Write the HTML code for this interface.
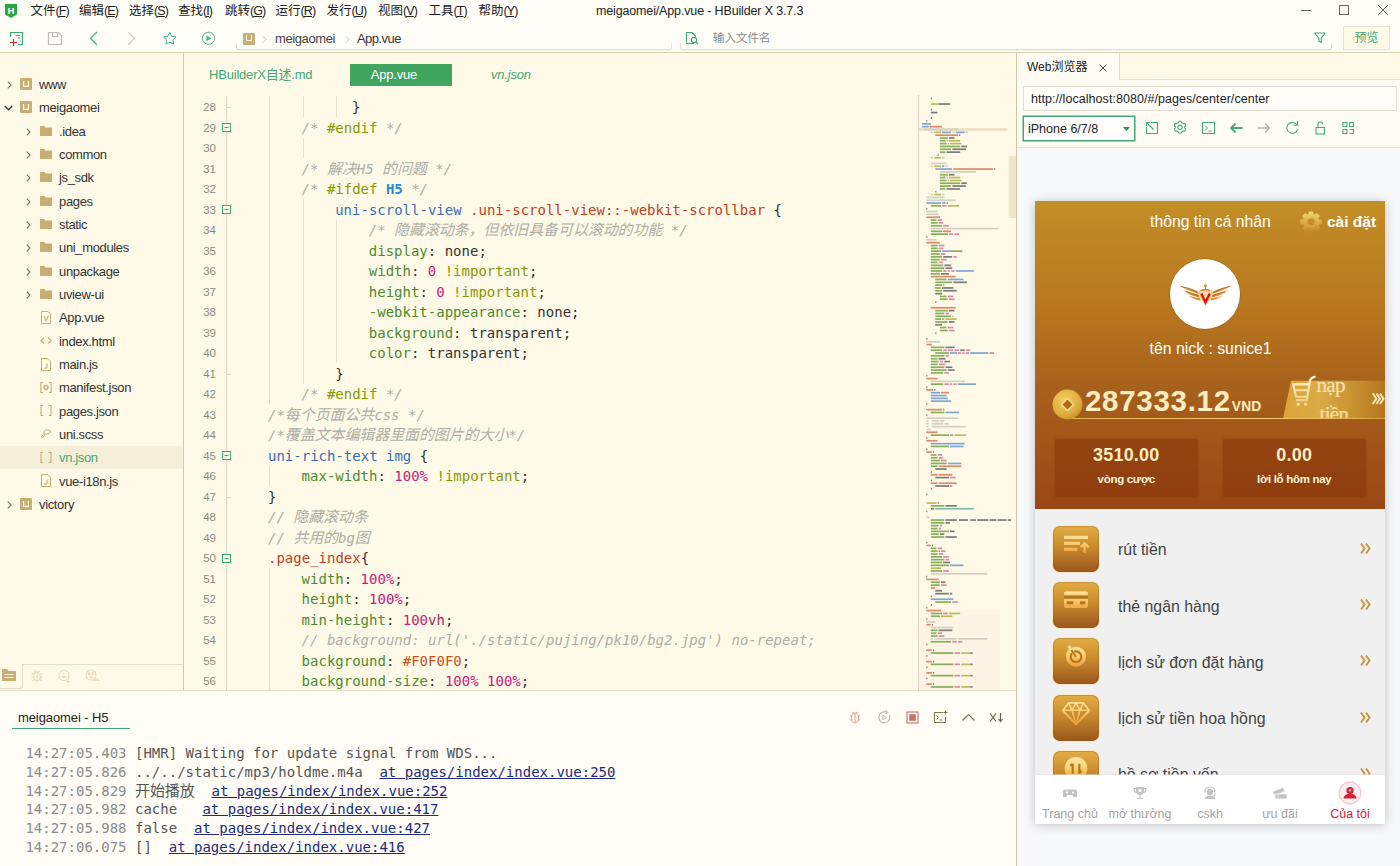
<!DOCTYPE html>
<html lang="zh">
<head>
<meta charset="utf-8">
<title>meigaomei/App.vue - HBuilder X 3.7.3</title>
<style>
*{box-sizing:border-box;margin:0;padding:0}
html,body{width:1400px;height:866px;overflow:hidden;background:#fffdf8}
body{position:relative;font-family:"Liberation Sans","Noto Sans CJK SC",sans-serif;font-size:13px;color:#333}
.abs{position:absolute}
svg{display:block;overflow:visible}
/* top bars */
#menubar{left:0;top:0;width:1400px;height:22px;background:#fffdf8}
#menubar span{position:absolute;top:3px;font-size:12.5px;color:#222;white-space:nowrap;line-height:16px}
#menubar i{font-style:normal;letter-spacing:-0.9px}
#toolbar{left:0;top:22px;width:1400px;height:31px;background:#fffdf8}
#topline{z-index:5;left:0;top:52px;width:1400px;height:1px;background:#ddd3b4}
/* sidebar */
#sidebar{left:0;top:52px;width:183px;height:638px;background:#fffae8}
#sideline{left:183px;top:53px;width:1px;height:637px;background:#d2caac}
.row{position:absolute;left:0;width:183px;height:23px;font-size:13px;color:#333;line-height:23px;white-space:nowrap}
.row .t{position:absolute;top:0.500px;letter-spacing:-0.350px}
/* editor */
#editor{left:184px;top:52px;width:833px;height:638px;background:#fffae8}
.code{font-family:"DejaVu Sans Mono","Liberation Mono","Noto Sans CJK SC",monospace;font-size:14px;white-space:pre}
.ln{position:absolute;left:200px;width:16px;text-align:right;font-size:11.5px;color:#8b8b80;line-height:20px;height:20px;font-family:"Liberation Sans",sans-serif}
.cl{position:absolute;left:234px;height:20px;line-height:20px;color:#333}

.c{color:#aeaea6;font-style:italic}
.d{color:#859900}
.h{color:#268bd2;font-weight:bold}
.tg{color:#3a6db5}
.cs{color:#c0401f}
.p{color:#4d8a32}
.n{color:#c7207c}
.u{color:#a02c5a}
.v{color:#333}
.hx{color:#c9531c}
.z{font-size:15px;letter-spacing:-0.1px}
.g{position:absolute;width:1px;background:#e6dfca}
.tab{letter-spacing:-0.2px;position:absolute;top:12px;height:22px;line-height:22px;font-size:13px;color:#3fa877;white-space:nowrap}
/* console */
#console{left:0;top:691px;width:1017px;height:175px;background:#fffdf6}
.cline{position:absolute;left:25px;height:18px;line-height:18px;color:#444}

.ts{color:#8c8c8c}
.cm{color:#555}
.lk{color:#1d2b7e;text-decoration:underline}
/* right */

#right{left:1017px;top:52px;width:383px;height:814px;background:#fffcf4}
#vdiv{left:1016px;top:53px;width:1px;height:813px;background:#cdc5a6}
#phone{left:1035px;top:201px;width:350px;height:623px;overflow:hidden;background:#f0f0f0;box-shadow:0 1px 10px rgba(0,0,0,.22)}
#phone .w{position:absolute;color:#fff;white-space:nowrap;line-height:20px}
.li{position:absolute;left:0;width:350px;height:56px}
.li .ib{position:absolute;left:18px;top:5px;width:46px;height:46px;border-radius:7px;background:linear-gradient(#e2ad45,#cd8f30 40%,#99571b);box-shadow:0 0 0 1px rgba(253,232,196,.95),inset 0 0 0 1px rgba(150,85,20,.3)}
.li .tx{position:absolute;left:83px;top:18.300px;font-size:15.900px;line-height:22px;color:#434343;white-space:nowrap}
.li .ar{position:absolute;left:324px;top:21px}
.tb{position:absolute;top:0;width:70px;height:50px;text-align:center;font-size:12.5px;color:#a4a4a4;white-space:nowrap}
.tb span{position:absolute;left:-10px;width:90px;top:31.600px;line-height:16px;text-align:center}

</style>
</head>
<body>
<div id="menubar" class="abs">
<svg class="abs" style="left:5px;top:4px" width="12" height="14" viewBox="0 0 12 14"><path d="M0 0H12V10.5L6 14L0 10.5Z" fill="#2aa744"/><text x="6" y="9.6" font-family="Liberation Sans,sans-serif" font-size="9.5" font-weight="bold" fill="#fff" text-anchor="middle">H</text></svg>
<span style="left:30.5px">文件<i>(<u>F</u>)</i></span><span style="left:79px">编辑<i>(<u>E</u>)</i></span><span style="left:129px">选择<i>(<u>S</u>)</i></span><span style="left:178px">查找<i>(<u>I</u>)</i></span><span style="left:225px">跳转<i>(<u>G</u>)</i></span><span style="left:275.5px">运行<i>(<u>R</u>)</i></span><span style="left:326.5px">发行<i>(<u>U</u>)</i></span><span style="left:378px">视图<i>(<u>V</u>)</i></span><span style="left:428.5px">工具<i>(<u>T</u>)</i></span><span style="left:478.5px">帮助<i>(<u>Y</u>)</i></span>
<span style="left:596px;font-size:12.5px;letter-spacing:-0.15px">meigaomei/App.vue - HBuilder X 3.7.3</span>
<svg class="abs" style="left:1296px;top:0" width="104" height="22" viewBox="0 0 104 22"><g stroke="#666" stroke-width="1" fill="none"><path d="M5 10.5H15"/><rect x="43.5" y="5.5" width="9" height="9"/><path d="M82 5L92 15M92 5L82 15"/></g></svg>
</div>
<div id="toolbar" class="abs">
<svg class="abs" style="left:0;top:0" width="240" height="30" viewBox="0 22 240 30" fill="none" stroke-width="1.2">
<g stroke="#3fa877"><path d="M10.5 37V32.5H22.5V44.5H18"/><path d="M15.5 35.5H20M18 38H20M19.5 41H20.5" stroke-width="1"/></g>
<path d="M13.500 39V46M10 42.500H17" stroke="#cc2a2a" stroke-width="1.100"/>
<g stroke="#bdbdbd"><path d="M48.5 32.5H58.5L61.5 35.5V44.5H48.5Z"/><path d="M52.5 32.5V36.5H57.5V32.5"/></g>
<path d="M97 32L90.500 38.500L97 45" stroke="#4db184" stroke-width="1.300"/>
<path d="M128 32L134.5 38.5L128 45" stroke="#cfcfcf" stroke-width="1.3"/>
<path d="M169.800 32.300L171.700 36.300L176 36.900L172.900 39.900L173.700 44.200L169.800 42.100L165.900 44.200L166.700 39.900L163.600 36.900L167.900 36.300Z" stroke="#4db184" stroke-width="1" stroke-linejoin="round"/>
<circle cx="208.500" cy="38.300" r="6.100" stroke="#4db184" stroke-width="1"/><path d="M206.800 36L210.800 38.300L206.800 40.600Z" fill="#4db184" stroke="#4db184" stroke-width="0.800" stroke-linejoin="round"/>
</svg>
<div class="abs" style="left:236px;top:21px;width:436px;height:7px;border-left:1px solid #e6dfc9;border-bottom:1px solid #dfd7bd;border-right:1px solid #e6dfc9;border-radius:0 0 2px 2px"></div>
<div class="abs" style="left:242.500px;top:10.500px;width:12px;height:12px;background:#c9ae74;border-radius:1px"></div><div class="abs" style="left:245.500px;top:13px;width:6px;height:6px;border:1.300px solid #fffae8;border-top:none"></div>
<svg class="abs" style="left:262px;top:13.500px" width="5" height="7" viewBox="0 0 5 7"><path d="M1 0.500L4 3.500L1 6.500" stroke="#c4c4c4" fill="none"/></svg><span class="abs" style="left:275px;top:9px;font-size:13px;color:#444;line-height:16px;letter-spacing:-0.400px">meigaomei</span><svg class="abs" style="left:345px;top:13.500px" width="5" height="7" viewBox="0 0 5 7"><path d="M1 0.500L4 3.500L1 6.500" stroke="#c4c4c4" fill="none"/></svg><span class="abs" style="left:357px;top:9px;font-size:13px;color:#333;line-height:16px;letter-spacing:-0.550px">App.vue</span>
<div class="abs" style="left:680px;top:21px;width:652px;height:7px;border-left:1px solid #e6dfc9;border-bottom:1px solid #dfd7bd;border-right:1px solid #e6dfc9;border-radius:0 0 2px 2px"></div>
<svg class="abs" style="left:685px;top:9px" width="14" height="14" viewBox="0 0 14 14" fill="none" stroke="#3fa877" stroke-width="1.1"><path d="M9 12.5H1.5V1.5H7L10.5 5V6"/><circle cx="9" cy="9" r="2.6"/><path d="M11 11L13 13"/></svg><span class="abs" style="left:713px;top:9px;font-size:11.5px;color:#8a8a8a;line-height:14px">输入文件名</span>
<svg class="abs" style="left:1314px;top:10px" width="12" height="12" viewBox="0 0 12 12" fill="none" stroke="#3fa877" stroke-width="1.1" stroke-linejoin="round"><path d="M0.8 1H11.2L7.2 6V10.5L4.8 9V6Z"/></svg><div class="abs" style="left:1343px;top:4px;width:47px;height:24px;background:#fffae8;border:1px solid #ebe4cf;color:#3fa877;font-size:12px;line-height:22px;text-align:center">预览</div>
</div>
<div id="topline" class="abs"></div>
<div id="sidebar" class="abs">
<div class="row" style="top:20.5px"><svg class="abs" style="left:6.5px;top:8.500px" width="5" height="8" viewBox="0 0 5 8"><path d="M0.800 0.700L4 4L0.800 7.300" stroke="#777" stroke-width="1.200" fill="none"/></svg><svg class="abs" style="left:20px;top:5.5px" width="12" height="12" viewBox="0 0 12 12"><rect width="12" height="12" rx="1" fill="#c9ae74"/><path d="M3.6 3V8.4H8.4V3" stroke="#fffae8" stroke-width="1.3" fill="none"/></svg><span class="t" style="left:39px">www</span></div>
<div class="row" style="top:43.8px"><svg class="abs" style="left:4px;top:9px" width="9" height="6" viewBox="0 0 9 6"><path d="M0.800 1L4.500 4.700L8.200 1" stroke="#3a3a3a" stroke-width="1.500" fill="none"/></svg><svg class="abs" style="left:20px;top:5.5px" width="12" height="12" viewBox="0 0 12 12"><rect width="12" height="12" rx="1" fill="#c9ae74"/><path d="M3.6 3V8.4H8.4V3" stroke="#fffae8" stroke-width="1.3" fill="none"/></svg><span class="t" style="left:39px">meigaomei</span></div>
<div class="row" style="top:67.2px"><svg class="abs" style="left:25.5px;top:8.500px" width="5" height="8" viewBox="0 0 5 8"><path d="M0.800 0.700L4 4L0.800 7.300" stroke="#777" stroke-width="1.200" fill="none"/></svg><svg class="abs" style="left:40px;top:6.5px" width="12" height="10" viewBox="0 0 12 10"><path d="M0 0.5Q0 0 0.5 0H4.5L5.5 1.5H11.5Q12 1.5 12 2V9.5Q12 10 11.5 10H0.5Q0 10 0 9.5Z" fill="#c9ae74"/></svg><span class="t" style="left:59px">.idea</span></div>
<div class="row" style="top:90.5px"><svg class="abs" style="left:25.5px;top:8.500px" width="5" height="8" viewBox="0 0 5 8"><path d="M0.800 0.700L4 4L0.800 7.300" stroke="#777" stroke-width="1.200" fill="none"/></svg><svg class="abs" style="left:40px;top:6.5px" width="12" height="10" viewBox="0 0 12 10"><path d="M0 0.5Q0 0 0.5 0H4.5L5.5 1.5H11.5Q12 1.5 12 2V9.5Q12 10 11.5 10H0.5Q0 10 0 9.5Z" fill="#c9ae74"/></svg><span class="t" style="left:59px">common</span></div>
<div class="row" style="top:113.8px"><svg class="abs" style="left:25.5px;top:8.500px" width="5" height="8" viewBox="0 0 5 8"><path d="M0.800 0.700L4 4L0.800 7.300" stroke="#777" stroke-width="1.200" fill="none"/></svg><svg class="abs" style="left:40px;top:6.5px" width="12" height="10" viewBox="0 0 12 10"><path d="M0 0.5Q0 0 0.5 0H4.5L5.5 1.5H11.5Q12 1.5 12 2V9.5Q12 10 11.5 10H0.5Q0 10 0 9.5Z" fill="#c9ae74"/></svg><span class="t" style="left:59px">js_sdk</span></div>
<div class="row" style="top:137.2px"><svg class="abs" style="left:25.5px;top:8.500px" width="5" height="8" viewBox="0 0 5 8"><path d="M0.800 0.700L4 4L0.800 7.300" stroke="#777" stroke-width="1.200" fill="none"/></svg><svg class="abs" style="left:40px;top:6.5px" width="12" height="10" viewBox="0 0 12 10"><path d="M0 0.5Q0 0 0.5 0H4.5L5.5 1.5H11.5Q12 1.5 12 2V9.5Q12 10 11.5 10H0.5Q0 10 0 9.5Z" fill="#c9ae74"/></svg><span class="t" style="left:59px">pages</span></div>
<div class="row" style="top:160.5px"><svg class="abs" style="left:25.5px;top:8.500px" width="5" height="8" viewBox="0 0 5 8"><path d="M0.800 0.700L4 4L0.800 7.300" stroke="#777" stroke-width="1.200" fill="none"/></svg><svg class="abs" style="left:40px;top:6.5px" width="12" height="10" viewBox="0 0 12 10"><path d="M0 0.5Q0 0 0.5 0H4.5L5.5 1.5H11.5Q12 1.5 12 2V9.5Q12 10 11.5 10H0.5Q0 10 0 9.5Z" fill="#c9ae74"/></svg><span class="t" style="left:59px">static</span></div>
<div class="row" style="top:183.8px"><svg class="abs" style="left:25.5px;top:8.500px" width="5" height="8" viewBox="0 0 5 8"><path d="M0.800 0.700L4 4L0.800 7.300" stroke="#777" stroke-width="1.200" fill="none"/></svg><svg class="abs" style="left:40px;top:6.5px" width="12" height="10" viewBox="0 0 12 10"><path d="M0 0.5Q0 0 0.5 0H4.5L5.5 1.5H11.5Q12 1.5 12 2V9.5Q12 10 11.5 10H0.5Q0 10 0 9.5Z" fill="#c9ae74"/></svg><span class="t" style="left:59px">uni_modules</span></div>
<div class="row" style="top:207.2px"><svg class="abs" style="left:25.5px;top:8.500px" width="5" height="8" viewBox="0 0 5 8"><path d="M0.800 0.700L4 4L0.800 7.300" stroke="#777" stroke-width="1.200" fill="none"/></svg><svg class="abs" style="left:40px;top:6.5px" width="12" height="10" viewBox="0 0 12 10"><path d="M0 0.5Q0 0 0.5 0H4.5L5.5 1.5H11.5Q12 1.5 12 2V9.5Q12 10 11.5 10H0.5Q0 10 0 9.5Z" fill="#c9ae74"/></svg><span class="t" style="left:59px">unpackage</span></div>
<div class="row" style="top:230.5px"><svg class="abs" style="left:25.5px;top:8.500px" width="5" height="8" viewBox="0 0 5 8"><path d="M0.800 0.700L4 4L0.800 7.300" stroke="#777" stroke-width="1.200" fill="none"/></svg><svg class="abs" style="left:40px;top:6.5px" width="12" height="10" viewBox="0 0 12 10"><path d="M0 0.5Q0 0 0.5 0H4.5L5.5 1.5H11.5Q12 1.5 12 2V9.5Q12 10 11.5 10H0.5Q0 10 0 9.5Z" fill="#c9ae74"/></svg><span class="t" style="left:59px">uview-ui</span></div>
<div class="row" style="top:253.8px"><svg class="abs" style="left:40px;top:5px" width="12" height="13" viewBox="0 0 12 13" fill="none" stroke="#c9ae74" stroke-width="1"><path d="M1.5 0.5H8L10.5 3V12.5H1.5Z"/><path d="M3.8 5L6 10L8.2 5" stroke-width="1.1"/></svg><span class="t" style="left:59px">App.vue</span></div>
<div class="row" style="top:277.2px"><svg class="abs" style="left:40px;top:5px" width="12" height="13" viewBox="0 0 12 13" fill="none" stroke="#c9ae74" stroke-width="1"><path d="M4 3.5L1 6.5L4 9.5M8 3.5L11 6.5L8 9.5" stroke-width="1.2"/></svg><span class="t" style="left:59px">index.html</span></div>
<div class="row" style="top:300.5px"><svg class="abs" style="left:40px;top:5px" width="12" height="13" viewBox="0 0 12 13" fill="none" stroke="#c9ae74" stroke-width="1"><path d="M1.5 0.5H8L10.5 3V12.5H1.5Z"/><path d="M7 5.5V9Q7 10.2 5.8 10.2Q5 10.2 4.6 9.6" stroke-width="1.1"/></svg><span class="t" style="left:59px">main.js</span></div>
<div class="row" style="top:323.8px"><svg class="abs" style="left:40px;top:5px" width="12" height="13" viewBox="0 0 12 13" fill="none" stroke="#c9ae74" stroke-width="1"><path d="M3 1.5H0.8V11.5H3M9 1.5H11.2V11.5H9" stroke-width="1.1"/><circle cx="6" cy="6.5" r="2" stroke-width="1.3"/></svg><span class="t" style="left:59px">manifest.json</span></div>
<div class="row" style="top:347.2px"><svg class="abs" style="left:40px;top:5px" width="12" height="13" viewBox="0 0 12 13" fill="none" stroke="#c9ae74" stroke-width="1"><path d="M3.2 1.5H1V11.5H3.2M8.8 1.5H11V11.5H8.8" stroke-width="1.1"/></svg><span class="t" style="left:59px">pages.json</span></div>
<div class="row" style="top:370.5px"><svg class="abs" style="left:40px;top:5px" width="12" height="13" viewBox="0 0 12 13" fill="none" stroke="#c9ae74" stroke-width="1"><path d="M10.5 3.5Q9 1 6 2Q3 3.2 4 5.5Q5.2 7.2 3.5 9Q2 10.5 1.2 9Q0.8 7.5 3.5 7.2M4 5.5Q7 7 9.5 5Q11 3.5 10 2.8" stroke-width="1"/></svg><span class="t" style="left:59px">uni.scss</span></div>
<div class="row" style="top:393.8px;background:#f5eed8"><svg class="abs" style="left:40px;top:5px" width="12" height="13" viewBox="0 0 12 13" fill="none" stroke="#c9ae74" stroke-width="1"><path d="M3.2 1.5H1V11.5H3.2M8.8 1.5H11V11.5H8.8" stroke-width="1.1"/></svg><span class="t" style="left:59px;color:#3fa877">vn.json</span></div>
<div class="row" style="top:417.2px"><svg class="abs" style="left:40px;top:5px" width="12" height="13" viewBox="0 0 12 13" fill="none" stroke="#c9ae74" stroke-width="1"><path d="M1.5 0.5H8L10.5 3V12.5H1.5Z"/><path d="M7 5.5V9Q7 10.2 5.8 10.2Q5 10.2 4.6 9.6" stroke-width="1.1"/></svg><span class="t" style="left:59px">vue-i18n.js</span></div>
<div class="row" style="top:440.5px"><svg class="abs" style="left:6.5px;top:8.500px" width="5" height="8" viewBox="0 0 5 8"><path d="M0.800 0.700L4 4L0.800 7.300" stroke="#777" stroke-width="1.200" fill="none"/></svg><svg class="abs" style="left:20px;top:5.5px" width="12" height="12" viewBox="0 0 12 12"><rect width="12" height="12" rx="1" fill="#c9ae74"/><path d="M3.6 3V8.4H8.4V3" stroke="#fffae8" stroke-width="1.3" fill="none"/></svg><span class="t" style="left:39px">victory</span></div>
<div class="abs" style="left:22px;top:612px;width:161px;height:1px;background:#e3dcc6"></div><div class="abs" style="left:0;top:612px;width:23px;height:25px;border-right:1px solid #e3dcc6;border-bottom:1px solid #e3dcc6;border-radius:0 0 3px 0"></div><svg class="abs" style="left:0;top:610.500px" width="110" height="26" viewBox="0 0 110 26" fill="none">
<path d="M2 6.5Q2 6 2.5 6H7L8.5 8H15.5Q16 8 16 8.5V17.5Q16 18 15.5 18H2.5Q2 18 2 17.5Z" fill="#c9ae74"/><path d="M4.5 11.5H13.5M4.5 14.5H13.5" stroke="#fffae8" stroke-width="1.2"/>
<g stroke="#e5d9b8" stroke-width="1.1"><ellipse cx="37" cy="13.5" rx="3.2" ry="4.5"/><path d="M34.5 8L36 9.5M39.5 8L38 9.5M31.5 11H33.8M31.5 14.5H33.8M32 18L34 16.5M42.5 11H40.2M42.5 14.5H40.2M42 18L40 16.5M37 9V18"/>
<circle cx="64" cy="12.5" r="5"/><path d="M64 10V15M62.5 13.5L64 15L65.5 13.5M66 18.5H70M68 16.5V20.5"/>
<circle cx="91" cy="12" r="5"/><circle cx="89" cy="10.5" r="1"/><circle cx="93" cy="10.5" r="1"/><circle cx="91" cy="14" r="1"/><path d="M94 17.5Q96.5 14 99 17.5Z"/></g>
</svg></div>
<div id="sideline" class="abs"></div>
<div id="editor" class="abs">
<!--MM--><svg class="abs" style="left:734px;top:43px" width="98" height="595" viewBox="0 0 98 595"><rect x="0" y="515" width="82" height="80" fill="#fbeee2" opacity="0.550"/><rect x="0.500" y="33.0" width="89" height="2.900" fill="#ebe2c8"/><rect x="0" y="0" width="1" height="595" fill="#d8d2bf"/><rect x="12.8" y="2.5" width="1.1" height="1.700" fill="#7b7b78"/><rect x="12.8" y="8.2" width="7.9" height="1.700" fill="#b7bd5a"/><rect x="20.7" y="8.2" width="11.3" height="1.700" fill="#7b7b78"/><rect x="12.8" y="13.8" width="1.1" height="1.700" fill="#7b7b78"/><rect x="12.8" y="16.7" width="6.8" height="1.700" fill="#7b7b78"/><rect x="12.8" y="22.3" width="1.1" height="1.700" fill="#7b7b78"/><rect x="8.3" y="25.1" width="1.1" height="1.700" fill="#7b7b78"/><rect x="3.8" y="28.0" width="9.0" height="1.700" fill="#7fa6d6"/><rect x="3.8" y="30.8" width="6.8" height="1.700" fill="#7fa6d6"/><rect x="11.7" y="30.8" width="12.4" height="1.700" fill="#dd8a6a"/><rect x="6.0" y="33.6" width="33.9" height="1.700" fill="#d3d0c2"/><rect x="12.8" y="36.5" width="2.3" height="1.700" fill="#d3d0c2"/><rect x="16.2" y="36.5" width="6.8" height="1.700" fill="#b7bd5a"/><rect x="24.1" y="36.5" width="9.0" height="1.700" fill="#7fa6d6"/><rect x="34.3" y="36.5" width="2.3" height="1.700" fill="#d3d0c2"/><rect x="37.7" y="36.5" width="9.0" height="1.700" fill="#7fa6d6"/><rect x="47.8" y="36.5" width="2.3" height="1.700" fill="#d3d0c2"/><rect x="17.3" y="39.3" width="22.6" height="1.700" fill="#dd8a6a"/><rect x="41.1" y="39.3" width="1.1" height="1.700" fill="#7b7b78"/><rect x="21.8" y="42.1" width="7.9" height="1.700" fill="#86b05a"/><rect x="30.9" y="42.1" width="5.6" height="1.700" fill="#7b7b78"/><rect x="21.8" y="44.9" width="5.6" height="1.700" fill="#86b05a"/><rect x="28.6" y="44.9" width="1.1" height="1.700" fill="#d98aa9"/><rect x="30.9" y="44.9" width="11.3" height="1.700" fill="#b7bd5a"/><rect x="21.8" y="47.8" width="6.8" height="1.700" fill="#86b05a"/><rect x="29.8" y="47.8" width="1.1" height="1.700" fill="#d98aa9"/><rect x="32.0" y="47.8" width="11.3" height="1.700" fill="#b7bd5a"/><rect x="21.8" y="50.6" width="20.3" height="1.700" fill="#86b05a"/><rect x="43.3" y="50.6" width="5.6" height="1.700" fill="#7b7b78"/><rect x="21.8" y="53.4" width="11.3" height="1.700" fill="#86b05a"/><rect x="34.3" y="53.4" width="13.6" height="1.700" fill="#7b7b78"/><rect x="21.8" y="56.3" width="5.6" height="1.700" fill="#86b05a"/><rect x="28.6" y="56.3" width="13.6" height="1.700" fill="#7b7b78"/><rect x="19.6" y="59.1" width="1.1" height="1.700" fill="#7b7b78"/><rect x="12.8" y="61.9" width="2.3" height="1.700" fill="#d3d0c2"/><rect x="16.2" y="61.9" width="6.8" height="1.700" fill="#b7bd5a"/><rect x="24.1" y="61.9" width="2.3" height="1.700" fill="#d3d0c2"/><rect x="12.8" y="67.6" width="15.8" height="1.700" fill="#d3d0c2"/><rect x="12.8" y="70.4" width="2.3" height="1.700" fill="#d3d0c2"/><rect x="16.2" y="70.4" width="6.8" height="1.700" fill="#b7bd5a"/><rect x="24.1" y="70.4" width="2.3" height="1.700" fill="#7fa6d6"/><rect x="27.5" y="70.4" width="2.3" height="1.700" fill="#d3d0c2"/><rect x="17.3" y="73.2" width="16.9" height="1.700" fill="#7fa6d6"/><rect x="35.4" y="73.2" width="39.5" height="1.700" fill="#dd8a6a"/><rect x="76.1" y="73.2" width="1.1" height="1.700" fill="#7b7b78"/><rect x="21.8" y="76.1" width="36.2" height="1.700" fill="#d3d0c2"/><rect x="21.8" y="78.9" width="7.9" height="1.700" fill="#86b05a"/><rect x="30.9" y="78.9" width="5.6" height="1.700" fill="#7b7b78"/><rect x="21.8" y="81.7" width="5.6" height="1.700" fill="#86b05a"/><rect x="28.6" y="81.7" width="1.1" height="1.700" fill="#d98aa9"/><rect x="30.9" y="81.7" width="11.3" height="1.700" fill="#b7bd5a"/><rect x="21.8" y="84.6" width="6.8" height="1.700" fill="#86b05a"/><rect x="29.8" y="84.6" width="1.1" height="1.700" fill="#d98aa9"/><rect x="32.0" y="84.6" width="11.3" height="1.700" fill="#b7bd5a"/><rect x="21.8" y="87.4" width="20.3" height="1.700" fill="#86b05a"/><rect x="43.3" y="87.4" width="5.6" height="1.700" fill="#7b7b78"/><rect x="21.8" y="90.2" width="11.3" height="1.700" fill="#86b05a"/><rect x="34.3" y="90.2" width="13.6" height="1.700" fill="#7b7b78"/><rect x="21.8" y="93.1" width="5.6" height="1.700" fill="#86b05a"/><rect x="28.6" y="93.1" width="13.6" height="1.700" fill="#7b7b78"/><rect x="17.3" y="95.9" width="1.1" height="1.700" fill="#7b7b78"/><rect x="12.8" y="98.7" width="2.3" height="1.700" fill="#d3d0c2"/><rect x="16.2" y="98.7" width="6.8" height="1.700" fill="#b7bd5a"/><rect x="24.1" y="98.7" width="2.3" height="1.700" fill="#d3d0c2"/><rect x="8.3" y="101.6" width="18.1" height="1.700" fill="#d3d0c2"/><rect x="8.3" y="104.4" width="29.4" height="1.700" fill="#d3d0c2"/><rect x="8.3" y="107.2" width="14.7" height="1.700" fill="#7fa6d6"/><rect x="24.1" y="107.2" width="3.4" height="1.700" fill="#7fa6d6"/><rect x="28.6" y="107.2" width="1.1" height="1.700" fill="#7b7b78"/><rect x="12.8" y="110.0" width="10.2" height="1.700" fill="#86b05a"/><rect x="24.1" y="110.0" width="4.5" height="1.700" fill="#d98aa9"/><rect x="29.7" y="110.0" width="11.3" height="1.700" fill="#b7bd5a"/><rect x="8.3" y="112.9" width="1.1" height="1.700" fill="#7b7b78"/><rect x="8.3" y="115.7" width="11.3" height="1.700" fill="#d3d0c2"/><rect x="8.3" y="118.5" width="12.4" height="1.700" fill="#d3d0c2"/><rect x="8.3" y="121.4" width="12.4" height="1.700" fill="#dd8a6a"/><rect x="20.7" y="121.4" width="1.1" height="1.700" fill="#7b7b78"/><rect x="12.8" y="124.2" width="5.6" height="1.700" fill="#86b05a"/><rect x="19.6" y="124.2" width="4.5" height="1.700" fill="#d98aa9"/><rect x="12.8" y="127.0" width="6.8" height="1.700" fill="#86b05a"/><rect x="20.7" y="127.0" width="4.5" height="1.700" fill="#d98aa9"/><rect x="12.8" y="129.9" width="11.3" height="1.700" fill="#86b05a"/><rect x="25.2" y="129.9" width="5.6" height="1.700" fill="#d98aa9"/><rect x="12.8" y="132.7" width="67.8" height="1.700" fill="#d3d0c2"/><rect x="12.8" y="135.5" width="11.3" height="1.700" fill="#86b05a"/><rect x="25.2" y="135.5" width="7.9" height="1.700" fill="#dd8a6a"/><rect x="12.8" y="138.3" width="16.9" height="1.700" fill="#86b05a"/><rect x="30.9" y="138.3" width="4.5" height="1.700" fill="#d98aa9"/><rect x="36.5" y="138.3" width="4.5" height="1.700" fill="#d98aa9"/><rect x="8.3" y="141.2" width="1.1" height="1.700" fill="#7b7b78"/><rect x="8.3" y="144.0" width="10.2" height="1.700" fill="#d3d0c2"/><rect x="8.3" y="146.8" width="13.6" height="1.700" fill="#dd8a6a"/><rect x="12.8" y="149.7" width="6.8" height="1.700" fill="#86b05a"/><rect x="20.7" y="149.7" width="5.6" height="1.700" fill="#d98aa9"/><rect x="12.8" y="152.5" width="6.8" height="1.700" fill="#86b05a"/><rect x="20.7" y="152.5" width="4.5" height="1.700" fill="#d98aa9"/><rect x="12.8" y="155.3" width="10.2" height="1.700" fill="#86b05a"/><rect x="24.1" y="155.3" width="9.0" height="1.700" fill="#7fa6d6"/><rect x="33.1" y="155.3" width="11.3" height="1.700" fill="#86b05a"/><rect x="12.8" y="158.2" width="9.0" height="1.700" fill="#86b05a"/><rect x="23.0" y="158.2" width="4.5" height="1.700" fill="#d98aa9"/><rect x="12.8" y="161.0" width="11.3" height="1.700" fill="#86b05a"/><rect x="25.2" y="161.0" width="9.0" height="1.700" fill="#7b7b78"/><rect x="35.4" y="161.0" width="3.4" height="1.700" fill="#d98aa9"/><rect x="12.8" y="163.8" width="9.0" height="1.700" fill="#86b05a"/><rect x="23.0" y="163.8" width="5.6" height="1.700" fill="#d98aa9"/><rect x="12.8" y="166.6" width="6.8" height="1.700" fill="#86b05a"/><rect x="20.7" y="166.6" width="4.5" height="1.700" fill="#d98aa9"/><rect x="12.8" y="169.5" width="12.4" height="1.700" fill="#86b05a"/><rect x="26.4" y="169.5" width="6.8" height="1.700" fill="#7b7b78"/><rect x="12.8" y="172.3" width="13.6" height="1.700" fill="#86b05a"/><rect x="27.5" y="172.3" width="6.8" height="1.700" fill="#7b7b78"/><rect x="12.8" y="175.1" width="11.3" height="1.700" fill="#86b05a"/><rect x="25.2" y="175.1" width="3.4" height="1.700" fill="#d98aa9"/><rect x="29.7" y="175.1" width="2.3" height="1.700" fill="#d98aa9"/><rect x="33.1" y="175.1" width="3.4" height="1.700" fill="#d98aa9"/><rect x="37.7" y="175.1" width="18.1" height="1.700" fill="#7fa6d6"/><rect x="12.8" y="178.0" width="9.0" height="1.700" fill="#86b05a"/><rect x="23.0" y="178.0" width="7.9" height="1.700" fill="#7b7b78"/><rect x="12.8" y="180.8" width="24.9" height="1.700" fill="#dd8a6a"/><rect x="17.3" y="183.6" width="11.3" height="1.700" fill="#86b05a"/><rect x="29.8" y="183.6" width="15.8" height="1.700" fill="#7fa6d6"/><rect x="17.3" y="186.5" width="16.9" height="1.700" fill="#86b05a"/><rect x="35.4" y="186.5" width="13.6" height="1.700" fill="#7b7b78"/><rect x="17.3" y="189.3" width="6.8" height="1.700" fill="#86b05a"/><rect x="25.2" y="189.3" width="1.1" height="1.700" fill="#d98aa9"/><rect x="17.3" y="192.1" width="5.6" height="1.700" fill="#86b05a"/><rect x="24.1" y="192.1" width="11.3" height="1.700" fill="#7b7b78"/><rect x="17.3" y="194.9" width="6.8" height="1.700" fill="#86b05a"/><rect x="25.2" y="194.9" width="13.6" height="1.700" fill="#7b7b78"/><rect x="17.3" y="197.8" width="6.8" height="1.700" fill="#7b7b78"/><rect x="21.8" y="200.6" width="6.8" height="1.700" fill="#86b05a"/><rect x="29.8" y="200.6" width="5.6" height="1.700" fill="#d98aa9"/><rect x="21.8" y="203.4" width="7.9" height="1.700" fill="#86b05a"/><rect x="30.9" y="203.4" width="5.6" height="1.700" fill="#d98aa9"/><rect x="17.3" y="206.3" width="1.1" height="1.700" fill="#7b7b78"/><rect x="12.8" y="211.9" width="24.9" height="1.700" fill="#dd8a6a"/><rect x="17.3" y="214.8" width="12.4" height="1.700" fill="#86b05a"/><rect x="30.9" y="214.8" width="5.6" height="1.700" fill="#7b7b78"/><rect x="17.3" y="217.6" width="9.0" height="1.700" fill="#86b05a"/><rect x="27.5" y="217.6" width="3.4" height="1.700" fill="#d98aa9"/><rect x="17.3" y="220.4" width="15.8" height="1.700" fill="#86b05a"/><rect x="34.3" y="220.4" width="1.1" height="1.700" fill="#d98aa9"/><rect x="17.3" y="223.2" width="5.6" height="1.700" fill="#86b05a"/><rect x="24.1" y="223.2" width="2.3" height="1.700" fill="#d98aa9"/><rect x="27.5" y="223.2" width="11.3" height="1.700" fill="#b7bd5a"/><rect x="17.3" y="226.1" width="12.4" height="1.700" fill="#86b05a"/><rect x="30.9" y="226.1" width="5.6" height="1.700" fill="#7b7b78"/><rect x="17.3" y="228.9" width="6.8" height="1.700" fill="#7b7b78"/><rect x="21.8" y="231.7" width="6.8" height="1.700" fill="#86b05a"/><rect x="29.8" y="231.7" width="5.6" height="1.700" fill="#d98aa9"/><rect x="21.8" y="234.6" width="7.9" height="1.700" fill="#86b05a"/><rect x="30.9" y="234.6" width="5.6" height="1.700" fill="#d98aa9"/><rect x="17.3" y="237.4" width="1.1" height="1.700" fill="#7b7b78"/><rect x="8.3" y="243.1" width="1.1" height="1.700" fill="#7b7b78"/><rect x="8.3" y="245.9" width="13.6" height="1.700" fill="#d3d0c2"/><rect x="8.3" y="248.7" width="5.6" height="1.700" fill="#dd8a6a"/><rect x="12.8" y="251.5" width="13.6" height="1.700" fill="#86b05a"/><rect x="27.5" y="251.5" width="9.0" height="1.700" fill="#7b7b78"/><rect x="12.8" y="254.4" width="11.3" height="1.700" fill="#86b05a"/><rect x="25.2" y="254.4" width="3.4" height="1.700" fill="#d98aa9"/><rect x="29.7" y="254.4" width="5.6" height="1.700" fill="#d98aa9"/><rect x="36.5" y="254.4" width="4.5" height="1.700" fill="#d98aa9"/><rect x="42.2" y="254.4" width="4.5" height="1.700" fill="#7b7b78"/><rect x="47.8" y="254.4" width="4.5" height="1.700" fill="#d98aa9"/><rect x="17.3" y="257.2" width="13.6" height="1.700" fill="#86b05a"/><rect x="32.0" y="257.2" width="6.8" height="1.700" fill="#7fa6d6"/><rect x="39.9" y="257.2" width="3.4" height="1.700" fill="#d98aa9"/><rect x="44.4" y="257.2" width="2.3" height="1.700" fill="#d98aa9"/><rect x="47.8" y="257.2" width="3.4" height="1.700" fill="#d98aa9"/><rect x="52.3" y="257.2" width="18.1" height="1.700" fill="#7fa6d6"/><rect x="71.6" y="257.2" width="4.5" height="1.700" fill="#dd8a6a"/><rect x="12.8" y="260.0" width="13.6" height="1.700" fill="#86b05a"/><rect x="27.5" y="260.0" width="3.4" height="1.700" fill="#d98aa9"/><rect x="12.8" y="262.9" width="6.8" height="1.700" fill="#86b05a"/><rect x="20.7" y="262.9" width="6.8" height="1.700" fill="#7b7b78"/><rect x="12.8" y="265.7" width="7.9" height="1.700" fill="#86b05a"/><rect x="21.8" y="265.7" width="3.4" height="1.700" fill="#d98aa9"/><rect x="26.4" y="265.7" width="5.6" height="1.700" fill="#7b7b78"/><rect x="12.8" y="268.5" width="6.8" height="1.700" fill="#86b05a"/><rect x="20.7" y="268.5" width="6.8" height="1.700" fill="#d98aa9"/><rect x="12.8" y="271.4" width="13.6" height="1.700" fill="#86b05a"/><rect x="27.5" y="271.4" width="6.8" height="1.700" fill="#7b7b78"/><rect x="12.8" y="274.2" width="15.8" height="1.700" fill="#86b05a"/><rect x="29.8" y="274.2" width="6.8" height="1.700" fill="#7b7b78"/><rect x="12.8" y="277.0" width="12.4" height="1.700" fill="#86b05a"/><rect x="26.4" y="277.0" width="4.5" height="1.700" fill="#d98aa9"/><rect x="8.3" y="279.8" width="1.1" height="1.700" fill="#7b7b78"/><rect x="8.3" y="282.7" width="11.3" height="1.700" fill="#dd8a6a"/><rect x="12.8" y="285.5" width="33.9" height="1.700" fill="#d3d0c2"/><rect x="12.8" y="288.3" width="12.4" height="1.700" fill="#86b05a"/><rect x="26.4" y="288.3" width="4.5" height="1.700" fill="#d98aa9"/><rect x="32.0" y="288.3" width="2.3" height="1.700" fill="#d98aa9"/><rect x="35.4" y="288.3" width="3.4" height="1.700" fill="#d98aa9"/><rect x="39.9" y="288.3" width="18.1" height="1.700" fill="#7fa6d6"/><rect x="8.3" y="291.2" width="1.1" height="1.700" fill="#7b7b78"/><rect x="8.3" y="294.0" width="6.8" height="1.700" fill="#dd8a6a"/><rect x="16.2" y="294.0" width="1.1" height="1.700" fill="#7b7b78"/><rect x="12.8" y="296.8" width="9.0" height="1.700" fill="#7fa6d6"/><rect x="23.0" y="296.8" width="7.9" height="1.700" fill="#dd8a6a"/><rect x="12.8" y="299.7" width="15.8" height="1.700" fill="#7fa6d6"/><rect x="12.8" y="302.5" width="16.9" height="1.700" fill="#7fa6d6"/><rect x="12.8" y="305.3" width="20.3" height="1.700" fill="#7fa6d6"/><rect x="8.3" y="308.1" width="1.1" height="1.700" fill="#7b7b78"/><rect x="8.3" y="313.8" width="15.8" height="1.700" fill="#dd8a6a"/><rect x="25.2" y="313.8" width="1.1" height="1.700" fill="#7b7b78"/><rect x="12.8" y="316.6" width="13.6" height="1.700" fill="#86b05a"/><rect x="27.5" y="316.6" width="13.6" height="1.700" fill="#7fa6d6"/><rect x="8.3" y="319.5" width="1.1" height="1.700" fill="#7b7b78"/><rect x="8.3" y="322.3" width="31.6" height="1.700" fill="#d3d0c2"/><rect x="8.3" y="325.1" width="2.3" height="1.700" fill="#d3d0c2"/><rect x="13.9" y="325.1" width="6.8" height="1.700" fill="#d3d0c2"/><rect x="21.8" y="325.1" width="4.5" height="1.700" fill="#d3d0c2"/><rect x="8.3" y="327.9" width="2.3" height="1.700" fill="#d3d0c2"/><rect x="13.9" y="327.9" width="11.3" height="1.700" fill="#d3d0c2"/><rect x="26.4" y="327.9" width="4.5" height="1.700" fill="#d3d0c2"/><rect x="8.3" y="330.8" width="2.3" height="1.700" fill="#d3d0c2"/><rect x="13.9" y="330.8" width="33.9" height="1.700" fill="#d3d0c2"/><rect x="8.3" y="333.6" width="4.5" height="1.700" fill="#d3d0c2"/><rect x="8.3" y="336.4" width="11.3" height="1.700" fill="#dd8a6a"/><rect x="12.8" y="339.3" width="18.1" height="1.700" fill="#86b05a"/><rect x="32.0" y="339.3" width="3.4" height="1.700" fill="#d98aa9"/><rect x="36.5" y="339.3" width="11.3" height="1.700" fill="#b7bd5a"/><rect x="8.3" y="342.1" width="1.1" height="1.700" fill="#7b7b78"/><rect x="8.3" y="344.9" width="11.3" height="1.700" fill="#dd8a6a"/><rect x="12.8" y="347.8" width="33.9" height="1.700" fill="#7fa6d6"/><rect x="12.8" y="350.6" width="18.1" height="1.700" fill="#86b05a"/><rect x="32.0" y="350.6" width="13.6" height="1.700" fill="#7fa6d6"/><rect x="8.3" y="353.4" width="1.1" height="1.700" fill="#7b7b78"/><rect x="8.3" y="356.2" width="5.6" height="1.700" fill="#dd8a6a"/><rect x="15.1" y="356.2" width="1.1" height="1.700" fill="#7b7b78"/><rect x="12.8" y="359.1" width="5.6" height="1.700" fill="#86b05a"/><rect x="19.6" y="359.1" width="4.5" height="1.700" fill="#d98aa9"/><rect x="12.8" y="361.9" width="6.8" height="1.700" fill="#86b05a"/><rect x="20.7" y="361.9" width="4.5" height="1.700" fill="#d98aa9"/><rect x="12.8" y="364.7" width="9.0" height="1.700" fill="#86b05a"/><rect x="23.0" y="364.7" width="5.6" height="1.700" fill="#d98aa9"/><rect x="12.8" y="367.6" width="15.8" height="1.700" fill="#86b05a"/><rect x="29.8" y="367.6" width="13.6" height="1.700" fill="#7fa6d6"/><rect x="12.8" y="370.4" width="6.8" height="1.700" fill="#86b05a"/><rect x="20.7" y="370.4" width="22.6" height="1.700" fill="#dd8a6a"/><rect x="17.3" y="373.2" width="11.3" height="1.700" fill="#7b7b78"/><rect x="12.8" y="376.1" width="1.1" height="1.700" fill="#7b7b78"/><rect x="12.8" y="378.9" width="6.8" height="1.700" fill="#dd8a6a"/><rect x="20.7" y="378.9" width="13.6" height="1.700" fill="#dd8a6a"/><rect x="17.3" y="381.7" width="13.6" height="1.700" fill="#7b7b78"/><rect x="32.0" y="381.7" width="5.6" height="1.700" fill="#d98aa9"/><rect x="12.8" y="384.6" width="1.1" height="1.700" fill="#7b7b78"/><rect x="12.8" y="387.4" width="6.8" height="1.700" fill="#dd8a6a"/><rect x="20.7" y="387.4" width="18.1" height="1.700" fill="#dd8a6a"/><rect x="17.3" y="390.2" width="13.6" height="1.700" fill="#7b7b78"/><rect x="32.0" y="390.2" width="2.3" height="1.700" fill="#d98aa9"/><rect x="12.8" y="393.0" width="1.1" height="1.700" fill="#7b7b78"/><rect x="8.3" y="398.7" width="1.1" height="1.700" fill="#7b7b78"/><rect x="8.3" y="407.2" width="10.2" height="1.700" fill="#b7bd5a"/><rect x="19.6" y="407.2" width="1.1" height="1.700" fill="#7b7b78"/><rect x="12.8" y="410.0" width="13.6" height="1.700" fill="#86b05a"/><rect x="27.5" y="410.0" width="11.3" height="1.700" fill="#7b7b78"/><rect x="12.8" y="412.9" width="3.4" height="1.700" fill="#7b7b78"/><rect x="17.3" y="412.9" width="38.4" height="1.700" fill="#7fb9b0"/><rect x="8.3" y="415.7" width="1.1" height="1.700" fill="#7b7b78"/><rect x="8.3" y="421.3" width="3.4" height="1.700" fill="#d3d0c2"/><rect x="12.8" y="424.2" width="13.6" height="1.700" fill="#86b05a"/><rect x="27.5" y="424.2" width="11.3" height="1.700" fill="#7b7b78"/><rect x="41.0" y="424.2" width="9.0" height="1.700" fill="#7b7b78"/><rect x="52.3" y="424.2" width="5.6" height="1.700" fill="#7b7b78"/><rect x="59.1" y="424.2" width="11.3" height="1.700" fill="#7b7b78"/><rect x="71.6" y="424.2" width="6.8" height="1.700" fill="#7b7b78"/><rect x="79.5" y="424.2" width="9.0" height="1.700" fill="#7b7b78"/><rect x="89.6" y="424.2" width="3.4" height="1.700" fill="#7b7b78"/><rect x="12.8" y="427.0" width="13.6" height="1.700" fill="#86b05a"/><rect x="27.5" y="427.0" width="4.5" height="1.700" fill="#7b7b78"/><rect x="12.8" y="429.8" width="7.9" height="1.700" fill="#86b05a"/><rect x="21.8" y="429.8" width="2.3" height="1.700" fill="#d98aa9"/><rect x="12.8" y="432.7" width="6.8" height="1.700" fill="#86b05a"/><rect x="20.7" y="432.7" width="2.3" height="1.700" fill="#d98aa9"/><rect x="12.8" y="435.5" width="18.1" height="1.700" fill="#86b05a"/><rect x="32.0" y="435.5" width="4.5" height="1.700" fill="#7b7b78"/><rect x="12.8" y="438.3" width="7.9" height="1.700" fill="#86b05a"/><rect x="21.8" y="438.3" width="4.5" height="1.700" fill="#7b7b78"/><rect x="12.8" y="441.2" width="13.6" height="1.700" fill="#86b05a"/><rect x="27.5" y="441.2" width="11.3" height="1.700" fill="#7b7b78"/><rect x="8.3" y="446.8" width="1.1" height="1.700" fill="#7b7b78"/><rect x="8.3" y="449.6" width="4.5" height="1.700" fill="#dd8a6a"/><rect x="13.9" y="449.6" width="1.1" height="1.700" fill="#7b7b78"/><rect x="12.8" y="452.5" width="5.6" height="1.700" fill="#86b05a"/><rect x="19.6" y="452.5" width="4.5" height="1.700" fill="#d98aa9"/><rect x="12.8" y="455.3" width="6.8" height="1.700" fill="#86b05a"/><rect x="20.7" y="455.3" width="1.1" height="1.700" fill="#7b7b78"/><rect x="23.0" y="455.3" width="4.5" height="1.700" fill="#d98aa9"/><rect x="12.8" y="458.1" width="6.8" height="1.700" fill="#86b05a"/><rect x="20.7" y="458.1" width="4.5" height="1.700" fill="#d98aa9"/><rect x="12.8" y="461.0" width="11.3" height="1.700" fill="#86b05a"/><rect x="25.2" y="461.0" width="5.6" height="1.700" fill="#d98aa9"/><rect x="12.8" y="463.8" width="13.6" height="1.700" fill="#86b05a"/><rect x="27.5" y="463.8" width="3.4" height="1.700" fill="#d98aa9"/><rect x="12.8" y="466.6" width="11.3" height="1.700" fill="#86b05a"/><rect x="25.2" y="466.6" width="6.8" height="1.700" fill="#7b7b78"/><rect x="12.8" y="469.5" width="18.1" height="1.700" fill="#86b05a"/><rect x="32.0" y="469.5" width="13.6" height="1.700" fill="#7fa6d6"/><rect x="12.8" y="472.3" width="10.2" height="1.700" fill="#b7bd5a"/><rect x="12.8" y="475.1" width="11.3" height="1.700" fill="#86b05a"/><rect x="25.2" y="475.1" width="5.6" height="1.700" fill="#d98aa9"/><rect x="12.8" y="477.9" width="56.5" height="1.700" fill="#d3d0c2"/><rect x="8.3" y="480.8" width="1.1" height="1.700" fill="#7b7b78"/><rect x="8.3" y="483.6" width="12.4" height="1.700" fill="#dd8a6a"/><rect x="12.8" y="486.4" width="9.0" height="1.700" fill="#86b05a"/><rect x="23.0" y="486.4" width="4.5" height="1.700" fill="#7b7b78"/><rect x="12.8" y="489.3" width="9.0" height="1.700" fill="#86b05a"/><rect x="23.0" y="489.3" width="5.6" height="1.700" fill="#d98aa9"/><rect x="12.8" y="492.1" width="4.5" height="1.700" fill="#dd8a6a"/><rect x="17.3" y="494.9" width="6.8" height="1.700" fill="#7b7b78"/><rect x="17.3" y="497.8" width="13.6" height="1.700" fill="#7b7b78"/><rect x="32.0" y="497.8" width="2.3" height="1.700" fill="#7b7b78"/><rect x="12.8" y="500.6" width="1.1" height="1.700" fill="#7b7b78"/><rect x="12.8" y="503.4" width="22.6" height="1.700" fill="#7fa6d6"/><rect x="17.3" y="506.2" width="15.8" height="1.700" fill="#86b05a"/><rect x="34.3" y="506.2" width="5.6" height="1.700" fill="#d98aa9"/><rect x="12.8" y="509.1" width="1.1" height="1.700" fill="#7b7b78"/><rect x="8.3" y="511.9" width="1.1" height="1.700" fill="#7b7b78"/><rect x="8.3" y="514.7" width="14.7" height="1.700" fill="#dd8a6a"/><rect x="12.8" y="517.6" width="11.3" height="1.700" fill="#86b05a"/><rect x="25.2" y="517.6" width="4.5" height="1.700" fill="#d98aa9"/><rect x="30.9" y="517.6" width="11.3" height="1.700" fill="#b7bd5a"/><rect x="12.8" y="520.4" width="9.0" height="1.700" fill="#86b05a"/><rect x="23.0" y="520.4" width="11.3" height="1.700" fill="#b7bd5a"/><rect x="8.3" y="523.2" width="1.1" height="1.700" fill="#7b7b78"/><rect x="8.3" y="526.1" width="9.0" height="1.700" fill="#d3d0c2"/><rect x="8.3" y="528.9" width="4.5" height="1.700" fill="#dd8a6a"/><rect x="13.9" y="528.9" width="1.1" height="1.700" fill="#7b7b78"/><rect x="12.8" y="531.7" width="22.6" height="1.700" fill="#d3d0c2"/><rect x="12.8" y="534.5" width="6.8" height="1.700" fill="#86b05a"/><rect x="20.7" y="534.5" width="13.6" height="1.700" fill="#7b7b78"/><rect x="12.8" y="537.4" width="5.6" height="1.700" fill="#86b05a"/><rect x="19.6" y="537.4" width="4.5" height="1.700" fill="#d98aa9"/><rect x="12.8" y="540.2" width="6.8" height="1.700" fill="#86b05a"/><rect x="20.7" y="540.2" width="5.6" height="1.700" fill="#d98aa9"/><rect x="12.8" y="543.0" width="2.3" height="1.700" fill="#d3d0c2"/><rect x="16.2" y="543.0" width="22.6" height="1.700" fill="#d3d0c2"/><rect x="39.9" y="543.0" width="29.4" height="1.700" fill="#d3d0c2"/><rect x="12.8" y="545.9" width="20.3" height="1.700" fill="#86b05a"/><rect x="34.3" y="545.9" width="4.5" height="1.700" fill="#d98aa9"/><rect x="39.9" y="545.9" width="4.5" height="1.700" fill="#d98aa9"/><rect x="8.3" y="548.7" width="1.1" height="1.700" fill="#7b7b78"/><rect x="8.3" y="554.4" width="5.6" height="1.700" fill="#dd8a6a"/><rect x="15.1" y="554.4" width="1.1" height="1.700" fill="#7b7b78"/><rect x="12.8" y="557.2" width="22.6" height="1.700" fill="#86b05a"/><rect x="36.5" y="557.2" width="5.6" height="1.700" fill="#d98aa9"/><rect x="43.3" y="557.2" width="9.0" height="1.700" fill="#b7bd5a"/><rect x="52.3" y="557.2" width="2.3" height="1.700" fill="#7b7b78"/><rect x="8.3" y="560.0" width="1.1" height="1.700" fill="#7b7b78"/><rect x="8.3" y="565.7" width="5.6" height="1.700" fill="#dd8a6a"/><rect x="15.1" y="565.7" width="1.1" height="1.700" fill="#7b7b78"/><rect x="12.8" y="568.5" width="22.6" height="1.700" fill="#86b05a"/><rect x="36.5" y="568.5" width="5.6" height="1.700" fill="#d98aa9"/><rect x="43.3" y="568.5" width="9.0" height="1.700" fill="#b7bd5a"/><rect x="52.3" y="568.5" width="2.3" height="1.700" fill="#7b7b78"/><rect x="8.3" y="571.3" width="1.1" height="1.700" fill="#7b7b78"/><rect x="8.3" y="577.0" width="5.6" height="1.700" fill="#dd8a6a"/><rect x="15.1" y="577.0" width="1.1" height="1.700" fill="#7b7b78"/><rect x="12.8" y="579.8" width="22.6" height="1.700" fill="#86b05a"/><rect x="36.5" y="579.8" width="5.6" height="1.700" fill="#d98aa9"/><rect x="43.3" y="579.8" width="9.0" height="1.700" fill="#b7bd5a"/><rect x="52.3" y="579.8" width="2.3" height="1.700" fill="#7b7b78"/><rect x="8.3" y="582.6" width="1.1" height="1.700" fill="#7b7b78"/><rect x="8.3" y="588.3" width="5.6" height="1.700" fill="#dd8a6a"/><rect x="15.1" y="588.3" width="1.1" height="1.700" fill="#7b7b78"/><rect x="12.8" y="591.1" width="22.6" height="1.700" fill="#86b05a"/><rect x="36.5" y="591.1" width="5.6" height="1.700" fill="#d98aa9"/><rect x="43.3" y="591.1" width="9.0" height="1.700" fill="#b7bd5a"/><rect x="52.3" y="591.1" width="2.3" height="1.700" fill="#7b7b78"/><rect x="90.500" y="61" width="7.500" height="62" fill="#efe6cc"/></svg>
<!--/MM-->
<span class="tab" style="left:25px">HBuilderX自述.md</span><span class="tab" style="left:166px;width:102px;background:#3fa55f;color:#fff;text-align:center;padding-right:14px">App.vue</span><span class="tab" style="left:307px;font-style:italic">vn.json</span>
<div class="g" style="left:42px;top:44px;height:594px;background:#ddd6c2"></div>
<div class="g" style="left:85.0px;top:44.0px;height:308.2px"></div><div class="g" style="left:85.0px;top:413.8px;height:20.5px"></div><div class="g" style="left:85.0px;top:516.2px;height:121.8px"></div><div class="g" style="left:118.6px;top:44.0px;height:21.2px"></div><div class="g" style="left:118.6px;top:147.2px;height:184.5px"></div><div class="g" style="left:152.2px;top:44.0px;height:21.2px"></div><div class="g" style="left:152.2px;top:167.8px;height:143.5px"></div>
<span class="ln" style="left:16px;top:45.0px">28</span><div class="abs" style="left:43px;top:55.0px;width:4px;height:1px;background:#ddd6c2"></div><span class="cl code" style="left:168.0px;top:45.0px"><span class="v">}</span></span>
<span class="ln" style="left:16px;top:65.5px">29</span><svg class="abs" style="left:38px;top:71.0px" width="9" height="9" viewBox="0 0 9 9"><rect x="0.5" y="0.5" width="8" height="8" fill="#fffae8" stroke="#3fa877"/><path d="M2.5 4.5H6.5" stroke="#3fa877"/></svg><span class="cl code" style="left:117.6px;top:65.5px"><span class="c">/* </span><span class="d">#endif</span><span class="c"> */</span></span>
<div class="g" style="left:118.6px;top:85.8px;height:20.500px"></div><div class="g" style="left:118.6px;top:85.700px;height:20.600px"></div><span class="ln" style="left:16px;top:86.0px">30</span>
<span class="ln" style="left:16px;top:106.5px">31</span><span class="cl code" style="left:117.6px;top:106.5px"><span class="c">/* <span class="z">解决</span>H5 <span class="z">的问题</span> */</span></span>
<span class="ln" style="left:16px;top:127.0px">32</span><span class="cl code" style="left:117.6px;top:127.0px"><span class="c">/* </span><span class="d">#ifdef</span> <span class="h">H5</span><span class="c"> */</span></span>
<span class="ln" style="left:16px;top:147.5px">33</span><svg class="abs" style="left:38px;top:153.0px" width="9" height="9" viewBox="0 0 9 9"><rect x="0.5" y="0.5" width="8" height="8" fill="#fffae8" stroke="#3fa877"/><path d="M2.5 4.5H6.5" stroke="#3fa877"/></svg><span class="cl code" style="left:151.2px;top:147.5px"><span class="tg">uni-scroll-view</span> <span class="cs">.uni-scroll-view::-webkit-scrollbar</span> <span class="v">{</span></span>
<span class="ln" style="left:16px;top:168.0px">34</span><span class="cl code" style="left:184.8px;top:168.0px"><span class="c">/* <span class="z">隐藏滚动条，但依旧具备可以滚动的功能</span> */</span></span>
<span class="ln" style="left:16px;top:188.5px">35</span><span class="cl code" style="left:184.8px;top:188.5px"><span class="p">display</span>: none;</span>
<span class="ln" style="left:16px;top:209.0px">36</span><span class="cl code" style="left:184.8px;top:209.0px"><span class="p">width</span>: <span class="n">0</span> <span class="d">!important</span>;</span>
<span class="ln" style="left:16px;top:229.5px">37</span><span class="cl code" style="left:184.8px;top:229.5px"><span class="p">height</span>: <span class="n">0</span> <span class="d">!important</span>;</span>
<span class="ln" style="left:16px;top:250.0px">38</span><span class="cl code" style="left:184.8px;top:250.0px"><span class="p">-webkit-appearance</span>: none;</span>
<span class="ln" style="left:16px;top:270.5px">39</span><span class="cl code" style="left:184.8px;top:270.5px"><span class="p">background</span>: transparent;</span>
<span class="ln" style="left:16px;top:291.0px">40</span><span class="cl code" style="left:184.8px;top:291.0px"><span class="p">color</span>: transparent;</span>
<span class="ln" style="left:16px;top:311.5px">41</span><div class="abs" style="left:43px;top:321.5px;width:4px;height:1px;background:#ddd6c2"></div><span class="cl code" style="left:151.2px;top:311.5px">}</span>
<span class="ln" style="left:16px;top:332.0px">42</span><span class="cl code" style="left:117.6px;top:332.0px"><span class="c">/* </span><span class="d">#endif</span><span class="c"> */</span></span>
<span class="ln" style="left:16px;top:352.5px">43</span><span class="cl code" style="left:84.0px;top:352.5px"><span class="c">/*<span class="z">每个页面公共</span>css */</span></span>
<span class="ln" style="left:16px;top:373.0px">44</span><span class="cl code" style="left:84.0px;top:373.0px"><span class="c">/*<span class="z">覆盖文本编辑器里面的图片的大小</span>*/</span></span>
<span class="ln" style="left:16px;top:393.5px">45</span><svg class="abs" style="left:38px;top:399.0px" width="9" height="9" viewBox="0 0 9 9"><rect x="0.5" y="0.5" width="8" height="8" fill="#fffae8" stroke="#3fa877"/><path d="M2.5 4.5H6.5" stroke="#3fa877"/></svg><span class="cl code" style="left:84.0px;top:393.5px"><span class="tg">uni-rich-text img</span> {</span>
<span class="ln" style="left:16px;top:414.0px">46</span><span class="cl code" style="left:117.6px;top:414.0px"><span class="p">max-width</span>: <span class="n">100%</span> <span class="d">!important</span>;</span>
<span class="ln" style="left:16px;top:434.5px">47</span><div class="abs" style="left:43px;top:444.5px;width:4px;height:1px;background:#ddd6c2"></div><span class="cl code" style="left:84.0px;top:434.5px">}</span>
<span class="ln" style="left:16px;top:455.0px">48</span><span class="cl code" style="left:84.0px;top:455.0px"><span class="c">// <span class="z">隐藏滚动条</span></span></span>
<span class="ln" style="left:16px;top:475.5px">49</span><span class="cl code" style="left:84.0px;top:475.5px"><span class="c">// <span class="z">共用的</span>bg<span class="z">图</span></span></span>
<span class="ln" style="left:16px;top:496.0px">50</span><svg class="abs" style="left:38px;top:501.5px" width="9" height="9" viewBox="0 0 9 9"><rect x="0.5" y="0.5" width="8" height="8" fill="#fffae8" stroke="#3fa877"/><path d="M2.5 4.5H6.5" stroke="#3fa877"/></svg><span class="cl code" style="left:84.0px;top:496.0px"><span class="cs">.page_index</span>{</span>
<span class="ln" style="left:16px;top:516.5px">51</span><span class="cl code" style="left:117.6px;top:516.5px"><span class="p">width</span>: <span class="n">100%</span>;</span>
<span class="ln" style="left:16px;top:537.0px">52</span><span class="cl code" style="left:117.6px;top:537.0px"><span class="p">height</span>: <span class="n">100%</span>;</span>
<span class="ln" style="left:16px;top:557.5px">53</span><span class="cl code" style="left:117.6px;top:557.5px"><span class="p">min-height</span>: <span class="n">100</span><span class="u">vh</span>;</span>
<span class="ln" style="left:16px;top:578.0px">54</span><span class="cl code" style="left:117.6px;top:578.0px"><span class="c">// background: url('./static/pujing/pk10/bg2.jpg') no-repeat;</span></span>
<span class="ln" style="left:16px;top:598.5px">55</span><span class="cl code" style="left:117.6px;top:598.5px"><span class="p">background</span>: <span class="hx">#F0F0F0</span>;</span>
<span class="ln" style="left:16px;top:619.0px">56</span><span class="cl code" style="left:117.6px;top:619.0px"><span class="p">background-size</span>: <span class="n">100%</span> <span class="n">100%</span>;</span>
</div>
<div id="console" class="abs">
<div class="abs" style="left:0;top:-1px;width:1017px;height:1px;background:#e3dcc6"></div>
<span class="abs" style="left:18px;top:19px;font-size:13px;line-height:16px;color:#222;letter-spacing:-0.1px">meigaomei - H5</span><div class="abs" style="left:12px;top:37px;width:118px;height:1px;background:#3fa877"></div>
<span class="cline code" style="left:25.4px;top:53.4px"><span class="ts">14:27:05.403</span> <span class="cm">[HMR] Waiting for update signal from WDS...</span></span>
<span class="cline code" style="left:25.4px;top:72.0px"><span class="ts">14:27:05.826</span> <span class="cm">../../static/mp3/holdme.m4a</span>  <span class="lk">at pages/index/index.vue:250</span></span>
<span class="cline code" style="left:25.4px;top:90.6px"><span class="ts">14:27:05.829</span> <span class="cm"><span class="z">开始播放</span></span>  <span class="lk">at pages/index/index.vue:252</span></span>
<span class="cline code" style="left:25.4px;top:109.4px"><span class="ts">14:27:05.982</span> <span class="cm">cache</span>   <span class="lk">at pages/index/index.vue:417</span></span>
<span class="cline code" style="left:25.4px;top:128.0px"><span class="ts">14:27:05.988</span> <span class="cm">false</span>  <span class="lk">at pages/index/index.vue:427</span></span>
<span class="cline code" style="left:25.4px;top:146.8px"><span class="ts">14:27:06.075</span> <span class="cm">[]</span>  <span class="lk">at pages/index/index.vue:416</span></span>
<svg class="abs" style="left:845px;top:16px" width="165" height="20" viewBox="845 707 165 20" fill="none" stroke-width="1.1">
<g stroke="#e8a394"><ellipse cx="855" cy="718" rx="3.6" ry="5"/><path d="M852.5 712L854 713.5M857.5 712L856 713.5M855 713.5V723M850 716H851.4M850 720H851.4M860 716H858.6M860 720H858.6"/></g>
<g stroke="#b9b4a6"><path d="M889.3 715A5.5 5.5 0 1 1 886.5 712.3"/><path d="M885.5 710.5L887.5 712.3L885.5 714" /><path d="M882.8 715.3L886.5 717.5L882.8 719.7Z" stroke-width="0.9"/></g>
<rect x="907" y="712" width="11" height="11" stroke="#c9706a"/><rect x="909.2" y="714.2" width="6.6" height="6.6" fill="#c9706a" stroke="none"/>
<g stroke="#7d7a52"><path d="M943 712.5H934.5V722.5H945.5V717"/><path d="M936.5 715.5L938.5 717.5L936.5 719.5M939.5 720H942" stroke-width="1"/><path d="M945.5 710.5V714.5M943.5 712.5H947.5" stroke-width="1"/></g>
<path d="M962.5 720.5L968.5 714.5L974.5 720.5" stroke="#7a7a5a" stroke-width="1.2"/>
<g stroke="#6a6344" stroke-width="1.200"><path d="M990 713.5L996 721.5M996 713.5L990 721.5"/><path d="M1000.5 713V721.5M998.5 719L1000.5 721.5L1002.5 719"/></g>
</svg>
</div>
<div id="right" class="abs">
<div class="abs" style="left:0;top:0;width:383px;height:28px;background:#fffae8;border-bottom:1px solid #e3dcc6"></div><div class="abs" style="left:0;top:0;width:103px;height:28px;background:#fffcf4;border-right:1px solid #e3dcc6"></div><span class="abs" style="left:10px;top:7px;font-size:12px;line-height:16px;color:#222;white-space:nowrap">Web浏览器</span><svg class="abs" style="left:82px;top:11.5px" width="8" height="8" viewBox="0 0 8 8"><path d="M0.5 0.5L7.5 7.5M7.5 0.5L0.5 7.5" stroke="#444" stroke-width="1"/></svg>
<div class="abs" style="left:6px;top:34px;width:374px;height:25px;background:#fffefa;border:1px solid #e2decf"></div><span class="abs" style="left:14px;top:39px;font-size:12.5px;line-height:16px;color:#222;white-space:nowrap;letter-spacing:0.05px">http://localhost:8080/#/pages/center/center</span>
<div class="abs" style="left:6px;top:64px;width:112px;height:25px;background:#fffefa;border:1px solid #3fa877;box-shadow:0 0 0 0.5px #3fa877"></div><span class="abs" style="left:11px;top:69px;font-size:12.5px;line-height:16px;color:#222;white-space:nowrap">iPhone 6/7/8</span><svg class="abs" style="left:106px;top:74.5px" width="7" height="4" viewBox="0 0 7 4"><path d="M0 0H7L3.5 4Z" fill="#2e8a5c"/></svg>
<svg class="abs" style="left:126px;top:66px" width="220" height="20" viewBox="1143 118 220 20" fill="none" stroke="#44ab7c" stroke-width="1.100">
<path d="M1151 122.5H1157.5V133.5H1146.5V127"/><path d="M1146.5 126V122.5H1150M1146.5 122.5L1153.5 129.5"/>
<path d="M1180.00 121.15L1180.53 121.27L1181.00 121.61L1181.40 122.08L1181.72 122.58L1182.01 122.99L1182.33 123.27L1182.72 123.41L1183.23 123.45L1183.82 123.48L1184.42 123.59L1184.96 123.83L1185.33 124.22L1185.48 124.74L1185.43 125.32L1185.22 125.90L1184.95 126.43L1184.73 126.89L1184.65 127.30L1184.73 127.71L1184.95 128.17L1185.22 128.70L1185.43 129.28L1185.48 129.86L1185.33 130.38L1184.96 130.77L1184.42 131.01L1183.82 131.12L1183.23 131.15L1182.72 131.19L1182.33 131.33L1182.01 131.61L1181.72 132.02L1181.40 132.52L1181.00 132.99L1180.53 133.33L1180.00 133.45L1179.47 133.33L1179.00 132.99L1178.60 132.52L1178.28 132.02L1177.99 131.61L1177.67 131.33L1177.28 131.19L1176.77 131.15L1176.18 131.12L1175.58 131.01L1175.04 130.77L1174.67 130.38L1174.52 129.86L1174.57 129.28L1174.78 128.70L1175.05 128.17L1175.27 127.71L1175.35 127.30L1175.27 126.89L1175.05 126.43L1174.78 125.90L1174.57 125.32L1174.52 124.74L1174.67 124.22L1175.04 123.83L1175.58 123.59L1176.18 123.48L1176.77 123.45L1177.28 123.41L1177.67 123.27L1177.99 122.99L1178.28 122.58L1178.60 122.08L1179.00 121.61L1179.47 121.27Z" stroke-linejoin="round"/><circle cx="1180" cy="127.300" r="2.200"/>
<rect x="1202.5" y="122.5" width="12" height="11"/><path d="M1205 125.5L1207.5 128L1205 130.5M1208.5 131H1211.5" stroke-width="1"/>
<path d="M1242.5 128H1231M1235.5 123.5L1231 128L1235.5 132.5" stroke-width="1.8"/>
<path d="M1258 128H1269.5M1265 123.5L1269.5 128L1265 132.5" stroke="#b0b0a8" stroke-width="1.3"/>
<path d="M1297 125A5.5 5.5 0 1 0 1297.6 129.5"/><path d="M1297.6 121V125.2H1293.4"/>
<rect x="1316" y="127.5" width="8.5" height="6.5"/><path d="M1318 127.5V124.5A2.4 2.4 0 0 1 1322.8 124.2"/>
<rect x="1343" y="122.500" width="4" height="4"/><rect x="1349.5" y="122.5" width="4" height="4"/><rect x="1343" y="129.5" width="4" height="4"/><path d="M1349.5 129.500H1353.500V133.5H1349.5"/>
</svg>
<div class="abs" style="left:0;top:94.500px;width:383px;height:720px;background:#f7f8fa;border-top:1px solid #e4e0cc"></div>
</div>
<div id="vdiv" class="abs"></div>
<div id="phone" class="abs">
<svg class="abs" width="0" height="0"><defs><linearGradient id="ig" gradientUnits="userSpaceOnUse" x1="0" y1="4" x2="0" y2="20"><stop offset="0" stop-color="#fde7a4"/><stop offset="0.500" stop-color="#f9cf6e"/><stop offset="1" stop-color="#ee9f3a"/></linearGradient></defs></svg>
<div class="abs" style="left:0;top:0;width:350px;height:307.5px;background:linear-gradient(#c28e26,#b8771f 35%,#a8611c 60%,#9a4715)"></div>
<span class="w" style="left:115px;top:11px;font-size:15.750px">thông tin cá nhân</span><svg class="abs" style="left:264px;top:9px" width="24" height="24" viewBox="0 0 24 24"><defs><linearGradient id="gg" x1="0" y1="0" x2="0" y2="1"><stop offset="0" stop-color="#f3d36a"/><stop offset="1" stop-color="#c58a28"/></linearGradient></defs><path d="M10.22 4.82L10.47 2.32L13.53 2.32L13.78 4.82L15.82 5.66L17.76 4.07L19.93 6.24L18.34 8.18L19.18 10.22L21.68 10.47L21.68 13.53L19.18 13.78L18.34 15.82L19.93 17.76L17.76 19.93L15.82 18.34L13.78 19.18L13.53 21.68L10.47 21.68L10.22 19.18L8.18 18.34L6.24 19.93L4.07 17.76L5.66 15.82L4.82 13.78L2.32 13.53L2.32 10.47L4.82 10.22L5.66 8.18L4.07 6.24L6.24 4.07L8.18 5.66Z" fill="url(#gg)" stroke="url(#gg)" stroke-width="1.800" stroke-linejoin="round"/><circle cx="12" cy="12" r="3.400" fill="#c2902a"/><circle cx="12" cy="12" r="4.300" fill="none" stroke="#d9a93f" stroke-width="0.800"/></svg><span class="w" style="left:292px;top:11px;font-size:15.500px;font-weight:bold">cài đặt</span>
<div class="abs" style="left:135.100px;top:57.900px;width:70.200px;height:70.200px;border-radius:50%;background:#fff;box-shadow:0 0 0 0.600px rgba(150,80,20,.6)"></div><svg class="abs" style="left:140px;top:78px" width="60" height="30" viewBox="1175 279 60 30">
<defs><linearGradient id="wg" x1="0" y1="0" x2="0" y2="1"><stop offset="0" stop-color="#f3bd55"/><stop offset="1" stop-color="#d27a25"/></linearGradient></defs>
<g fill="url(#wg)">
<path d="M1178.500 285.500Q1189 287 1198 291.500L1199 294Q1188 291 1178.500 285.500Z"/>
<path d="M1182.500 290Q1191 292.500 1199 294.800L1199.500 297.500Q1189 295.500 1182.500 290Z"/>
<path d="M1188 295.500Q1194 297 1200 298L1200.500 300.500Q1193 299.500 1188 295.500Z"/>
<path d="M1232.500 285.500Q1222 287 1213 291.500L1212 294Q1223 291 1232.500 285.500Z"/>
<path d="M1228.500 290Q1220 292.500 1212 294.800L1211.500 297.500Q1222 295.500 1228.500 290Z"/>
<path d="M1223 295.500Q1217 297 1211 298L1210.500 300.500Q1218 299.500 1223 295.500Z"/>
</g>
<g stroke="#8a4a18" stroke-width="0.700" fill="none" opacity="0.800"><path d="M1181 286.300Q1190 288.500 1197 292M1186 291.500Q1192 293.500 1198 295.500M1230 286.300Q1221 288.500 1214 292M1225 291.500Q1219 293.500 1213 295.500"/></g>
<path d="M1198.500 290.500Q1205.500 287.500 1212.500 290.500L1211 298L1205.500 306L1200 298Z" fill="#f0c878"/>
<path d="M1205.500 306L1202.500 301H1208.500Z" fill="#d9d9d9"/>
<path d="M1200 291.500Q1205.500 289.500 1211 291.500L1209.500 297.500L1205.500 303L1201.500 297.500Z" fill="#f6dfa6"/>
<path d="M1201.300 293.500L1205.500 302.300L1209.700 293.500" stroke="#d6121a" stroke-width="2.300" fill="none" stroke-linejoin="miter"/>
<circle cx="1205.500" cy="285.800" r="1.500" fill="#c98f45"/><path d="M1205.500 287V289.500" stroke="#c98f45" stroke-width="1"/>
<path d="M1201 290.800Q1205.500 288.300 1210 290.800" stroke="#e0672a" stroke-width="1.200" fill="none"/>
</svg>
<span class="w" style="left:114.59999999999991px;top:138.3px;font-size:15.800px">tên nick : sunice1</span>
<svg class="abs" style="left:205px;top:171px" width="145" height="50" viewBox="1240 372 145 50">
<defs><linearGradient id="bg1" x1="0" y1="0" x2="1" y2="0"><stop offset="0" stop-color="#dca33a"/><stop offset="0.35" stop-color="#dbab46"/><stop offset="0.75" stop-color="#c58d2d"/><stop offset="1" stop-color="#b6761f"/></linearGradient>
<linearGradient id="cg" gradientUnits="userSpaceOnUse" x1="0" y1="376" x2="0" y2="402"><stop offset="0" stop-color="#fff6d2"/><stop offset="1" stop-color="#f0d283"/></linearGradient></defs>
<path d="M1291 380.800H1385V418.400H1283Z" fill="url(#bg1)"/>
<g fill="none" stroke="url(#cg)" stroke-linejoin="round" stroke-linecap="round">
<path d="M1314.800 376.800Q1311 377.500 1310 380.500L1306.800 400.200H1296.800" stroke-width="2.200"/>
<path d="M1293.200 384.300H1309" stroke-width="2.400"/>
<path d="M1293.200 384.300L1296 396.800H1307.200" stroke-width="2"/>
<path d="M1294.800 390.300H1308" stroke-width="2"/>
</g>
<circle cx="1298.300" cy="404.200" r="1.600" fill="#f6e0a0"/><circle cx="1305.500" cy="404.200" r="1.600" fill="#f6e0a0"/>
<g fill="none" stroke="#fbeab8" stroke-width="2"><path d="M1372.800 393.500L1376.300 398.800L1372.800 404M1376.400 393.500L1379.900 398.800L1376.400 404M1380 393.500L1383.500 398.800L1380 404"/></g>
</svg><div class="abs" style="left:270px;top:170px;width:70px;height:48.300px;overflow:hidden"><span class="w" style="left:11.500px;top:0.900px;font-size:21px;letter-spacing:-0.700px;line-height:26px;color:#f1dda4;text-shadow:0 0 0.700px #f1dda4;font-family:'Liberation Serif',serif">nạp</span><span class="w" style="left:14.500px;top:29.900px;font-size:21px;letter-spacing:-0.700px;line-height:26px;color:#f0d99a;text-shadow:0 0 0.700px #f0d99a;font-family:'Liberation Serif',serif">tiền</span></div>
<div class="abs" style="left:35px;top:217px;width:315px;height:1.300px;background:linear-gradient(90deg,#e9b84c,#f2cf72 60%,#d9a43a)"></div><svg class="abs" style="left:16.5px;top:188px" width="31" height="31" viewBox="0 0 31 31"><defs><radialGradient id="co" cx="0.4" cy="0.35" r="0.75"><stop offset="0" stop-color="#f4cf5e"/><stop offset="0.7" stop-color="#dcaa3a"/><stop offset="1" stop-color="#b98528"/></radialGradient></defs>
<circle cx="15.500" cy="15.500" r="15" fill="url(#co)"/><path d="M15.500 9.500L21.500 15.500L15.500 21.500L9.500 15.500Z" fill="#b4661c" stroke="#f7dc86" stroke-width="1.6"/></svg><span class="w" style="left:50px;top:181.5px;font-size:29.500px;line-height:36px;font-weight:bold;color:#fdeec2;letter-spacing:0.700px">287333.12</span><span class="w" style="left:196.800px;top:196.500px;font-size:13.800px;line-height:18px;font-weight:bold;color:#fdeec2;letter-spacing:0.200px">VND</span>
<div class="abs" style="left:19.5px;top:238px;width:143.500px;height:58px;background:rgba(135,52,10,.55);border-radius:3px;box-shadow:0 0 2px rgba(120,45,8,.5)"></div><span class="w" style="left:19.5px;width:143.500px;text-align:center;top:242.600px;font-size:18px;line-height:22px;font-weight:bold;color:#fdeec2;letter-spacing:0.2px">3510.00</span><span class="w" style="left:19.5px;width:143.500px;text-align:center;top:268.700px;font-size:11.500px;line-height:18px;font-weight:bold;letter-spacing:-0.3px;color:#fdf3d8">vòng cược</span>
<div class="abs" style="left:187.5px;top:238px;width:143.500px;height:58px;background:rgba(135,52,10,.55);border-radius:3px;box-shadow:0 0 2px rgba(120,45,8,.5)"></div><span class="w" style="left:187.5px;width:143.500px;text-align:center;top:242.600px;font-size:18px;line-height:22px;font-weight:bold;color:#fdeec2;letter-spacing:0.2px">0.00</span><span class="w" style="left:187.5px;width:143.500px;text-align:center;top:268.700px;font-size:11.500px;line-height:18px;font-weight:bold;letter-spacing:-0.3px;color:#fdf3d8">lời lỗ hôm nay</span>
<div class="li" style="top:320.2px"><div class="ib"><svg class="abs" style="left:9px;top:4px" width="28" height="28" viewBox="1.500 2 21 21" fill="none" stroke="url(#ig)" stroke-width="2"><path d="M3 7.500H21M3 12H15M3 16.500H13" stroke-width="2.400"/><path d="M18.500 19V12.500M15.500 15L18.500 12L21.500 15" stroke-width="1.800"/></svg></div><span class="tx">rút tiền</span><svg class="ar" width="13" height="13" viewBox="0 0 13 13" fill="none" stroke="#c8953c" stroke-width="1.900"><path d="M2 1.500L5.500 6.500L2 11.500M7 1.500L10.500 6.500L7 11.500"/></svg></div>
<div class="li" style="top:376.3px"><div class="ib"><svg class="abs" style="left:9px;top:4px" width="28" height="28" viewBox="1.500 2 21 21" fill="none" stroke="url(#ig)" stroke-width="2"><rect x="3" y="6" width="18" height="12.500" rx="1.500" fill="url(#ig)" stroke="none"/><rect x="3" y="9" width="18" height="2.600" fill="#b5751f" stroke="none"/><rect x="5" y="13.500" width="5" height="2.200" fill="#b5751f" stroke="none"/><rect x="15" y="13.500" width="4" height="2.200" fill="#b5751f" stroke="none"/></svg></div><span class="tx">thẻ ngân hàng</span><svg class="ar" width="13" height="13" viewBox="0 0 13 13" fill="none" stroke="#c8953c" stroke-width="1.900"><path d="M2 1.500L5.500 6.500L2 11.500M7 1.500L10.500 6.500L7 11.500"/></svg></div>
<div class="li" style="top:432.4px"><div class="ib"><svg class="abs" style="left:9px;top:4px" width="28" height="28" viewBox="1.500 2 21 21" fill="none" stroke="url(#ig)" stroke-width="2"><circle cx="12" cy="13" r="7.500" fill="url(#ig)" stroke="none"/><circle cx="12" cy="13" r="4" stroke="#b5751f" stroke-width="1.600"/><path d="M12 13L6.500 5" stroke="url(#ig)" stroke-width="2"/><path d="M12 13L8.500 8" stroke="#b5751f" stroke-width="1.400"/></svg></div><span class="tx">lịch sử đơn đặt hàng</span><svg class="ar" width="13" height="13" viewBox="0 0 13 13" fill="none" stroke="#c8953c" stroke-width="1.900"><path d="M2 1.500L5.500 6.500L2 11.500M7 1.500L10.500 6.500L7 11.500"/></svg></div>
<div class="li" style="top:488.5px"><div class="ib"><svg class="abs" style="left:9px;top:4px" width="28" height="28" viewBox="1.500 2 21 21" fill="none" stroke="url(#ig)" stroke-width="2"><path d="M6.500 5H17.500L22 10.500L12 21L2 10.500Z" stroke-width="1.300" stroke-linejoin="round"/><path d="M2 10.500H22M6.500 5L9 10.500L12 21L15 10.500L17.500 5M9 10.500L12 5L15 10.500" stroke-width="1.100" stroke-linejoin="round"/></svg></div><span class="tx">lịch sử tiền hoa hồng</span><svg class="ar" width="13" height="13" viewBox="0 0 13 13" fill="none" stroke="#c8953c" stroke-width="1.900"><path d="M2 1.500L5.500 6.500L2 11.500M7 1.500L10.500 6.500L7 11.500"/></svg></div>
<div class="li" style="top:544.6px"><div class="ib"><svg class="abs" style="left:9px;top:4px" width="28" height="28" viewBox="1.500 2 21 21" fill="none" stroke="url(#ig)" stroke-width="2"><circle cx="12" cy="12" r="8.500" fill="url(#ig)" stroke="none"/><path d="M9.500 8.500V16M7.800 10.300L9.500 8.500M14.500 16V8.500M16.200 13.800L14.500 15.600" stroke="#b5751f" stroke-width="1.600"/></svg></div><span class="tx">hồ sơ tiền vốn</span><svg class="ar" width="13" height="13" viewBox="0 0 13 13" fill="none" stroke="#c8953c" stroke-width="1.900"><path d="M2 1.500L5.500 6.500L2 11.500M7 1.500L10.500 6.500L7 11.500"/></svg></div>
<div class="abs" style="left:0;top:573.5px;width:350px;height:50px;background:#fff;box-shadow:0 -0.500px 0 #e2e2e2"><div class="tb" style="left:0px"><svg class="abs" style="left:25px;top:8px" width="20" height="20" viewBox="0 0 20 20" fill="none" stroke="#c4c4c4" stroke-width="1.200"><path d="M4.500 6.500H15.500Q17 6.500 17 8.500V14H14L12.500 12H7.500L6 14H3V8.500Q3 6.500 4.500 6.500Z" fill="#c4c4c4" stroke="none"/><circle cx="7" cy="9.500" r="1.100" fill="#fff" stroke="none"/><circle cx="13" cy="9.500" r="1.100" fill="#fff" stroke="none"/></svg><span>Trang chủ</span></div><div class="tb" style="left:70px"><svg class="abs" style="left:25px;top:8px" width="20" height="20" viewBox="0 0 20 20" fill="none" stroke="#c4c4c4" stroke-width="1.200"><path d="M6 4H14V8Q14 12 10 12Q6 12 6 8Z" fill="#c4c4c4" stroke="none"/><path d="M6 5.500H4Q4 9 6.500 9.500M14 5.500H16Q16 9 13.500 9.500M10 12V15M7 15.500H13"/><circle cx="10" cy="7.500" r="1.500" fill="#fff" stroke="none"/></svg><span>mở thưởng</span></div><div class="tb" style="left:140px"><svg class="abs" style="left:25px;top:8px" width="20" height="20" viewBox="0 0 20 20" fill="none" stroke="#c4c4c4" stroke-width="1.200"><circle cx="10" cy="9" r="3.200" fill="#c4c4c4" stroke="none"/><path d="M4.500 16Q5 12.500 10 12.500Q15 12.500 15.500 16Z" fill="#c4c4c4" stroke="none"/><path d="M5 9.500Q5 4 10 4Q15 4 15 9.500" /><path d="M15 10V12Q15 13 13 13"/></svg><span>cskh</span></div><div class="tb" style="left:210px"><svg class="abs" style="left:25px;top:8px" width="20" height="20" viewBox="0 0 20 20" fill="none" stroke="#c4c4c4" stroke-width="1.200"><path d="M3 9L13 4.500L14.500 8L4.500 12.500Z" fill="#c4c4c4" stroke="none"/><path d="M5 11H17V16H5Z" fill="#c4c4c4" stroke="#fff" stroke-width="0.800"/><path d="M8 12.500V14.500" stroke="#fff" stroke-width="0.800"/></svg><span>ưu đãi</span></div><div class="tb" style="left:280px;color:#d01c3c"><svg class="abs" style="left:23px;top:6px" width="24" height="24" viewBox="0 0 24 24" fill="none"><circle cx="12" cy="12" r="10.800" fill="#fdeef0" stroke="#f7c3ca" stroke-width="1.200"/><circle cx="12" cy="9.500" r="3.600" fill="#d81e36"/><path d="M5.500 17.500Q6 12.800 12 12.800Q18 12.800 18.500 17.500Z" fill="#d81e36"/><circle cx="12" cy="9.300" r="1.200" fill="#f9c9cf"/></svg><span>Của tôi</span></div></div>

</div>
</body>
</html>
